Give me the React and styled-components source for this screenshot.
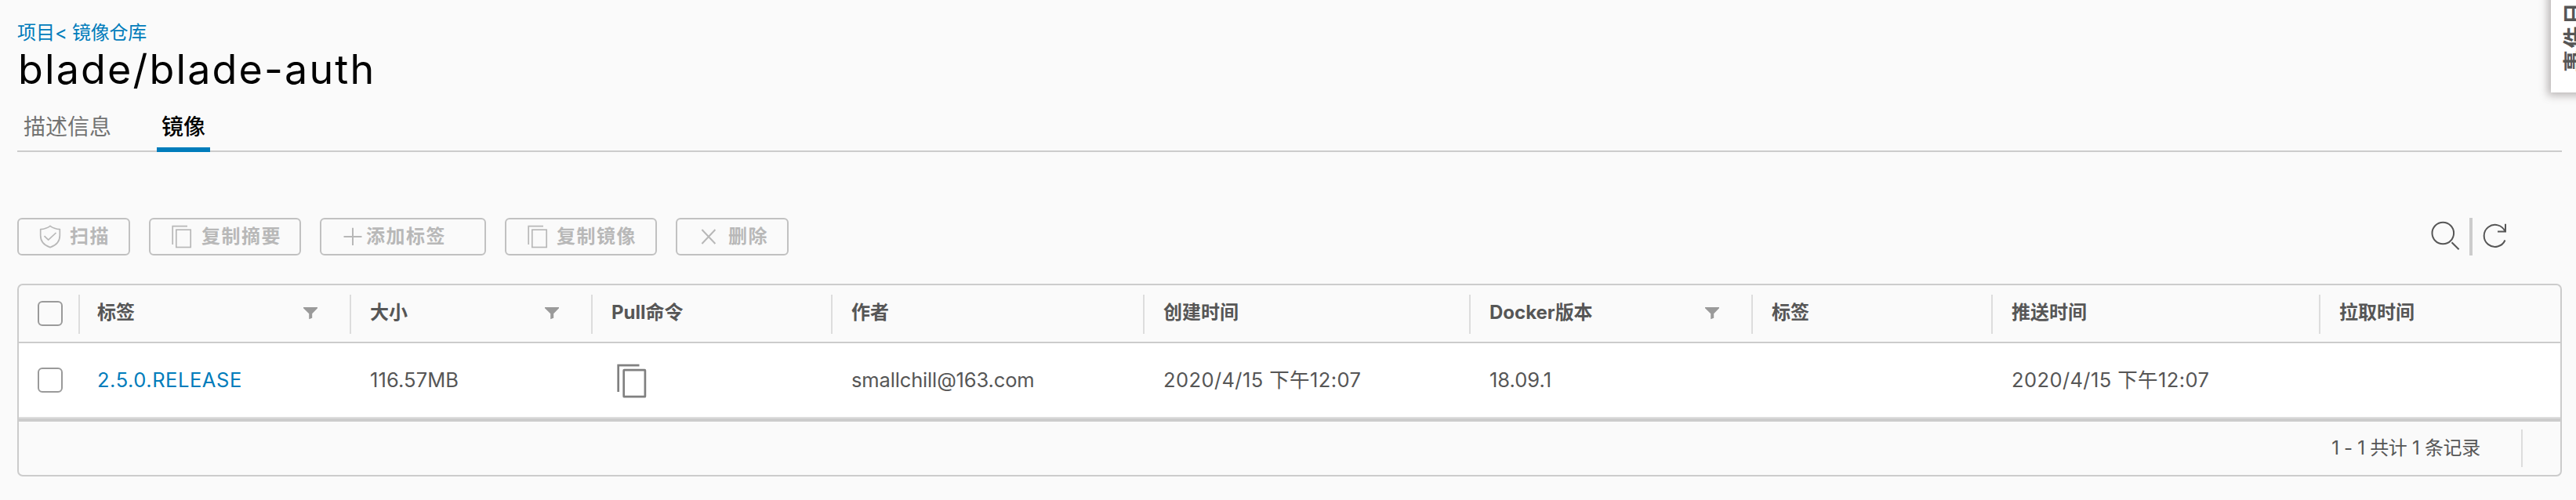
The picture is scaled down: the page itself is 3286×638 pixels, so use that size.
import React from "react";
import styled, { createGlobalStyle } from "styled-components";

const Global = createGlobalStyle`
  *, *::before, *::after { box-sizing: border-box; }
  html, body { margin: 0; background: #fafafa; overflow: hidden; }
  body {
    font-family: Inter, "Noto Sans CJK SC", sans-serif;
    color: #565656;
  }
`;

const Page = styled.div`
  position: relative;
  height: 638px;
  padding: 24px 18px 0 22px;
  overflow: hidden;
  background: #fafafa;
`;

const Breadcrumb = styled.nav`
  height: 36px;
  font-size: 24px;
  line-height: 35px;
  color: #007cbb;
`;

const Crumb = styled.a`
  color: inherit;
  letter-spacing: ${(p) => p.$tracking || "normal"};
`;

const Title = styled.h1`
  height: 58px;
  margin: 0;
  padding-left: 1px;
  font-size: 52px;
  font-weight: 400;
  line-height: 58px;
  letter-spacing: 2.15px;
  color: #000;
`;

const Tabs = styled.div`
  display: flex;
  gap: 52px;
  height: 76px;
  padding: 26px 0 0 2px;
  box-shadow: inset 0 -2px 0 #ccc;
`;

const Tab = styled.button`
  height: 50px;
  padding: 0 6px 8px;
  border: 0;
  border-bottom: 6px solid ${(p) => (p.$active ? "#007cbb" : "transparent")};
  background: none;
  font: inherit;
  font-size: 28px;
  font-weight: ${(p) => (p.$active ? 500 : 400)};
  line-height: 36px;
  color: ${(p) => (p.$active ? "#000" : "#737373")};
`;

const Toolbar = styled.div`
  display: flex;
  align-items: center;
  justify-content: space-between;
  height: 48px;
  margin-top: 84px;
`;

const ButtonGroup = styled.div`
  display: flex;
  gap: 24px;
`;

const Button = styled.button`
  display: flex;
  align-items: center;
  gap: ${(p) => p.$gap}px;
  width: ${(p) => p.$width}px;
  height: 48px;
  padding: 0 0 0 24px;
  border: 2px solid #c1c1c1;
  border-radius: 6px;
  background: transparent;
  font: inherit;
  font-size: 24px;
  font-weight: 600;
  line-height: 44px;
  letter-spacing: 1.5px;
  white-space: nowrap;
  color: #b8b8b8;
`;

const Icon = styled.svg`
  display: block;
  flex: none;
  width: ${(p) => p.$size}px;
  height: ${(p) => p.$size}px;
  fill: none;
  stroke: currentColor;
  stroke-width: ${(p) => p.$stroke || 2};
`;

const GridActions = styled.div`
  display: flex;
  align-items: center;
  padding-right: 68px;
  color: #565656;
`;

const Divider = styled.span`
  width: 4px;
  height: 48px;
  margin: 0 8px 0 10px;
  background: #ccc;
`;

const Datagrid = styled.section`
  height: 246px;
  margin-top: 36px;
  border: 2px solid #ccc;
  border-radius: 7px;
  overflow: hidden;
`;

const Row = styled.div`
  display: grid;
  grid-template-columns: 76px 346px 308px 306px 398px 416px 360px 306px 418px 308px;
  align-items: center;
`;

const HeaderRow = styled(Row)`
  height: 74px;
  border-bottom: 2px solid #ccc;
  font-size: 24px;
  font-weight: 700;
`;

const BodyRow = styled(Row)`
  height: 96px;
  border-bottom: 2px solid #ddd;
  background: #fff;
  font-size: 25.5px;
`;

const SelectCell = styled.div`
  padding-left: 24px;
`;

const Checkbox = styled.input`
  display: block;
  appearance: none;
  width: 32px;
  height: 32px;
  margin: 0;
  border: 2px solid #9a9a9a;
  border-radius: 6px;
  background: transparent;
`;

const HeaderCell = styled.div`
  display: flex;
  align-items: center;
  justify-content: space-between;
  height: 50px;
  margin-top: 2px;
  padding: 0 41px 4px ${(p) => (p.$first ? 22 : 24)}px;
  border-left: 2px solid #ddd;
  line-height: 46px;
  white-space: nowrap;
`;

const Cell = styled.div`
  padding-left: ${(p) => (p.$first ? 24 : 26)}px;
  line-height: 40px;
  white-space: nowrap;
  letter-spacing: ${(p) => p.$tracking || "normal"};
`;

const TagLink = styled.a`
  color: #007cbb;
`;

const CopyButton = styled.button`
  display: block;
  margin-left: -2px;
  padding: 0;
  border: 0;
  background: none;
  color: #808080;
`;

const Footer = styled.footer`
  display: flex;
  align-items: center;
  justify-content: flex-end;
  height: 72px;
  padding-right: 48px;
  border-top: 4px solid #ccc;
  font-size: 24px;
`;

const Summary = styled.div`
  display: flex;
  align-items: center;
  height: 48px;
  padding: 0 52px 6px 0;
  border-right: 2px solid #ddd;
  letter-spacing: -0.3px;
`;

const EventTab = styled.aside`
  position: absolute;
  top: -30px;
  right: -28px;
  display: flex;
  justify-content: center;
  width: 60px;
  height: 148px;
  padding-bottom: 26px;
  background: #fff;
  box-shadow: 0 0 10px 4px rgba(100, 90, 90, 0.42);
`;

const EventLabel = styled.span`
  writing-mode: vertical-rl;
  text-orientation: sideways;
  transform: rotate(180deg);
  font-size: 28px;
  font-weight: 600;
  line-height: 34px;
  letter-spacing: 2.4px;
  white-space: nowrap;
`;

const ShieldIcon = () => (
  <Icon $size={32} $stroke={1.7} viewBox="0 0 32 32">
    <path d="M16 2.4C12.6 5 8.3 6.4 3.7 6.7V14.5C3.7 22 8.6 27.2 16 29.6C23.4 27.2 28.3 22 28.3 14.5V6.7C23.7 6.4 19.4 5 16 2.4Z" />
    <path d="M8.5 15.2L13.7 20.2L23.5 11" />
  </Icon>
);

const CopyIcon = () => (
  <Icon $size={32} $stroke={1.7} viewBox="0 0 32 32">
    <path d="M23 2.7H4.2V26" />
    <rect x="8.8" y="7.2" width="18.4" height="22.3" />
  </Icon>
);

const PlusIcon = () => (
  <Icon $size={32} viewBox="0 0 32 32">
    <path d="M4.5 16H27.5M16 4.7V27" />
  </Icon>
);

const CloseIcon = () => (
  <Icon $size={32} viewBox="0 0 32 32">
    <path d="M7.4 7L24.4 25M24.4 7L7.4 25" />
  </Icon>
);

const SearchIcon = () => (
  <Icon $size={40} viewBox="0 0 40 40">
    <circle cx="16.3" cy="13.7" r="13.8" transform="translate(0 1.8)" />
    <path d="M27.5 27.3L36.6 36.2" />
  </Icon>
);

const RefreshIcon = () => (
  <Icon $size={38} viewBox="0 0 38 38">
    <path d="M33.6 12.5A14 14 0 1 0 33.5 23.5" />
    <path d="M24 12.5H34V2.8" />
  </Icon>
);

const FilterIcon = () => (
  <Icon $size={18} viewBox="0 0 18 18">
    <path d="M0 2H18V3.2L11.2 10.2V15.7L7.2 17.2V10.2L0 3.2Z" fill="#9a9a9a" stroke="none" />
  </Icon>
);

const PullCopyIcon = () => (
  <Icon $size={48} $stroke={2.7} viewBox="0 0 48 48">
    <path d="M37.5 5.2H10.7V39" />
    <rect x="17.7" y="11.2" width="27.2" height="34" rx="0.5" />
  </Icon>
);

const actions = [
  { label: "扫描", icon: ShieldIcon, width: 144, gap: 9 },
  { label: "复制摘要", icon: CopyIcon, width: 194, gap: 9 },
  { label: "添加标签", icon: PlusIcon, width: 212, gap: 1 },
  { label: "复制镜像", icon: CopyIcon, width: 194, gap: 8 },
  { label: "删除", icon: CloseIcon, width: 144, gap: 9 },
];

const columns = [
  { label: "标签", filter: true },
  { label: "大小", filter: true },
  { label: "Pull命令" },
  { label: "作者" },
  { label: "创建时间" },
  { label: "Docker版本", filter: true },
  { label: "标签" },
  { label: "推送时间" },
  { label: "拉取时间" },
];

export default function App() {
  return (
    <>
      <Global />
      <Page>
        <Breadcrumb>
          <Crumb>项目</Crumb>
          <Crumb $tracking="-0.3px">&lt; 镜像仓库</Crumb>
        </Breadcrumb>
        <Title>blade/blade-auth</Title>
        <Tabs>
          <Tab>描述信息</Tab>
          <Tab $active>镜像</Tab>
        </Tabs>
        <Toolbar>
          <ButtonGroup>
            {actions.map(({ label, icon: ActionIcon, width, gap }) => (
              <Button key={label} $width={width} $gap={gap} disabled>
                <ActionIcon />
                {label}
              </Button>
            ))}
          </ButtonGroup>
          <GridActions>
            <SearchIcon />
            <Divider />
            <RefreshIcon />
          </GridActions>
        </Toolbar>
        <Datagrid>
          <HeaderRow>
            <SelectCell>
              <Checkbox type="checkbox" />
            </SelectCell>
            {columns.map(({ label, filter }, i) => (
              <HeaderCell key={i} $first={i === 0}>
                {label}
                {filter && <FilterIcon />}
              </HeaderCell>
            ))}
          </HeaderRow>
          <BodyRow>
            <SelectCell>
              <Checkbox type="checkbox" />
            </SelectCell>
            <Cell $first $tracking="0.55px">
              <TagLink>2.5.0.RELEASE</TagLink>
            </Cell>
            <Cell $tracking="0.1px">116.57MB</Cell>
            <Cell>
              <CopyButton>
                <PullCopyIcon />
              </CopyButton>
            </Cell>
            <Cell $tracking="-0.15px">smallchill@163.com</Cell>
            <Cell $tracking="0.4px">2020/4/15 下午12:07</Cell>
            <Cell>18.09.1</Cell>
            <Cell />
            <Cell $tracking="0.4px">2020/4/15 下午12:07</Cell>
            <Cell />
          </BodyRow>
          <Footer>
            <Summary>1 - 1 共计 1 条记录</Summary>
          </Footer>
        </Datagrid>
        <EventTab>
          <EventLabel>事件日志</EventLabel>
        </EventTab>
      </Page>
    </>
  );
}
